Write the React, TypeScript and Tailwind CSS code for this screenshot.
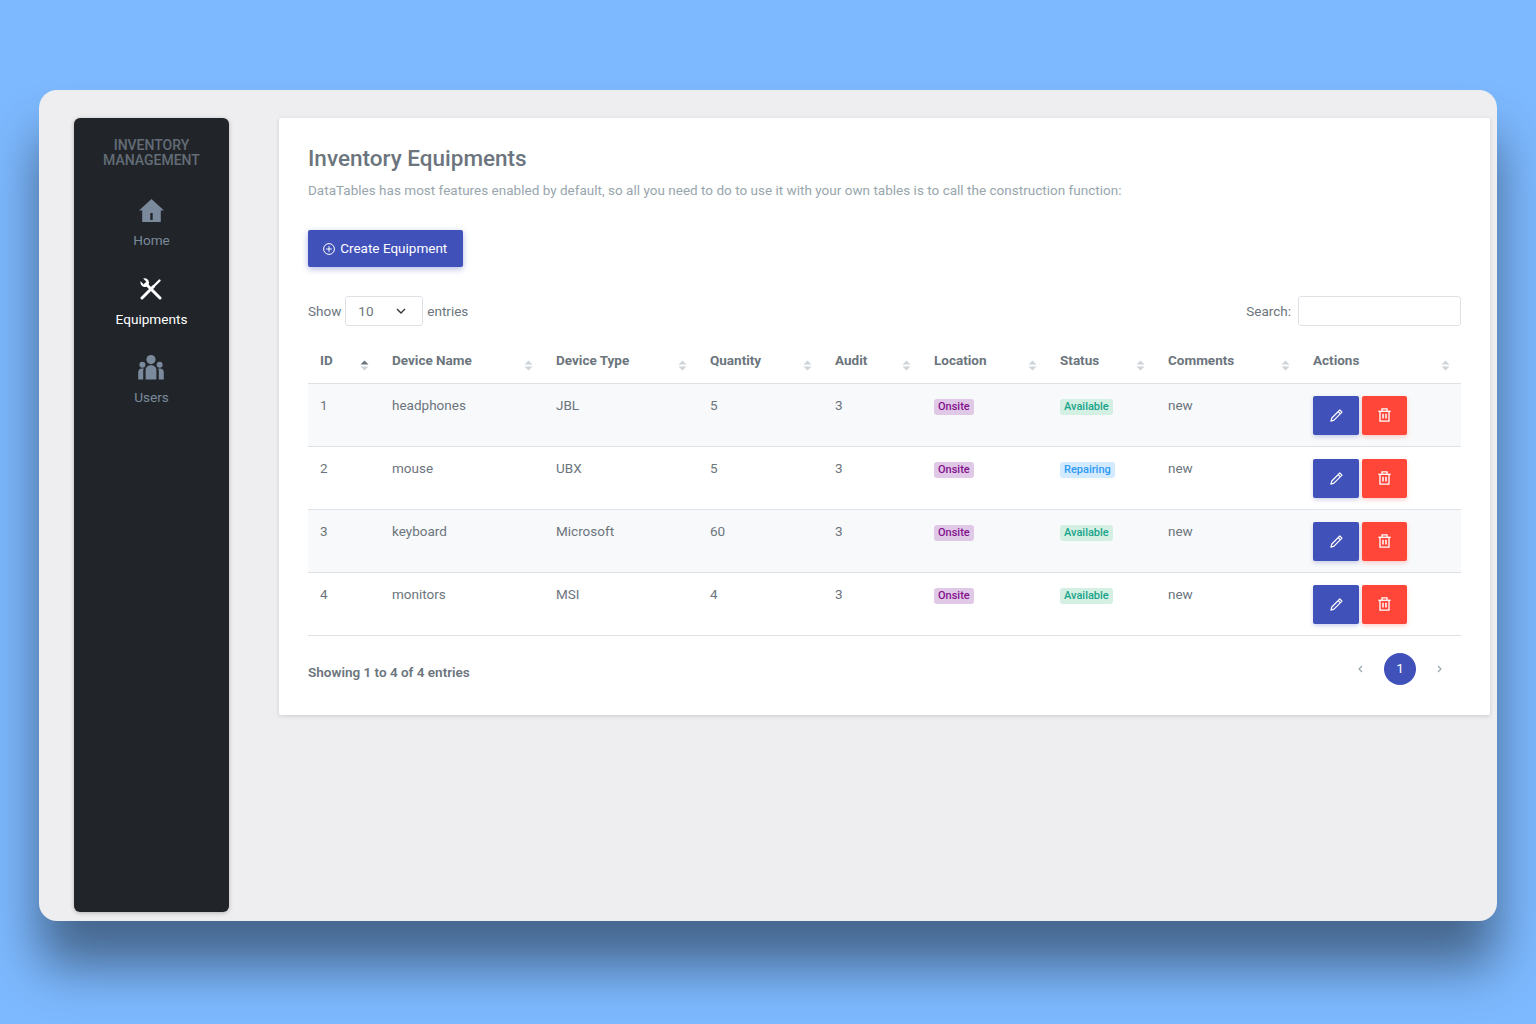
import React from "react";

const rows = [
  { id: 1, name: "headphones", type: "JBL", qty: 5, status: "Available" },
  { id: 2, name: "mouse", type: "UBX", qty: 5, status: "Repairing" },
  { id: 3, name: "keyboard", type: "Microsoft", qty: 60, status: "Available" },
  { id: 4, name: "monitors", type: "MSI", qty: 4, status: "Available" },
];

const cols = [
  { label: "ID", w: "w-[72px]", active: true },
  { label: "Device Name", w: "w-[164px]" },
  { label: "Device Type", w: "w-[154px]" },
  { label: "Quantity", w: "w-[125px]" },
  { label: "Audit", w: "w-[99px]" },
  { label: "Location", w: "w-[126px]" },
  { label: "Status", w: "w-[108px]" },
  { label: "Comments", w: "w-[145px]" },
  { label: "Actions", w: "w-[160px]" },
];

function SortIcon({ active }: { active?: boolean }) {
  return (
    <svg width="9" height="11" viewBox="0 0 9 11" className="absolute right-[11px] top-[16px]">
      <path d="M4.5 0.5 8.5 4.5H0.5Z" fill={active ? "#6c757d" : "#ced4da"} />
      <path d="M4.5 10.5 8.5 6.5H0.5Z" fill="#ced4da" />
    </svg>
  );
}

function HomeIcon() {
  return (
    <svg width="25" height="23" viewBox="0 0 25 23">
      <path d="M12.5 0 0 11.5H3.2V22.5Q3.2 23 3.8 23H21.2Q21.8 23 21.8 22.5V11.5H25Z" fill="#7a899c" />
      <rect x="11.3" y="14" width="2.4" height="7" fill="#212529" />
    </svg>
  );
}

function ToolsIcon() {
  return (
    <svg width="22" height="22" viewBox="0 0 22 22" fill="none" stroke="#fff">
      <path d="M6 6 20 20" strokeWidth="3" strokeLinecap="round" />
      <path d="M0.6 3.2 3.8 6.4 6.4 3.8 3.2 0.6C5.8 -0.4 9 1.4 9 4.4 9 7.4 6 9.6 3.4 8.8 1.2 8 0 5.4 0.6 3.2Z" fill="#fff" stroke="none" />
      <path d="M2 20 13.5 8.5" strokeWidth="3" strokeLinecap="round" />
      <path d="M13.5 8.5 19.5 2.5" strokeWidth="2.4" strokeLinecap="round" />
    </svg>
  );
}

function UsersIcon() {
  return (
    <svg width="26" height="25" viewBox="0 0 26 25" fill="#7a899c">
      <circle cx="13" cy="4.6" r="4.6" />
      <circle cx="4.4" cy="9.7" r="3" />
      <circle cx="21.6" cy="9.7" r="3" />
      <path d="M7.6 24.5V15C7.6 12 10 10.3 13 10.3S18.4 12 18.4 15V24.5Z" />
      <path d="M0.2 24.5V17.5C0.2 15 1.6 13.6 4 13.6H5.8C5.4 14.5 5.2 15.4 5.2 16.5V24.5Z" />
      <path d="M25.8 24.5V17.5C25.8 15 24.4 13.6 22 13.6H20.2C20.6 14.5 20.8 15.4 20.8 16.5V24.5Z" />
    </svg>
  );
}

function PencilIcon() {
  return (
    <svg width="13" height="13" viewBox="0 0 13 13" fill="none" stroke="#fff" strokeWidth="1.2" strokeLinejoin="round">
      <path d="M9.8 1 12 3.2 4 11.2 0.9 12.1 1.8 9Z" />
      <path d="M8.2 2.6 10.4 4.8" />
    </svg>
  );
}

function TrashIcon() {
  return (
    <svg width="13" height="14" viewBox="0 0 13 14" fill="none" stroke="#fff" strokeWidth="1.3">
      <path d="M0.3 3.3H12.7" />
      <path d="M4 3.2V0.8H9V3.2" />
      <path d="M2 3.3V13.2H11V3.3" />
      <path d="M5 5.8V10.4M8 5.8V10.4" strokeWidth="1.5" />
    </svg>
  );
}

function NavItem({ label, active, icon }: { label: string; active?: boolean; icon: React.ReactNode }) {
  return (
    <div className="flex flex-col items-center">
      <div className="h-[26px] flex items-center justify-center">{icon}</div>
      <div className={`mt-[8px] text-[13.6px] leading-[18px] ${active ? "text-white" : "text-[#7a899c]"}`}>{label}</div>
    </div>
  );
}

export default function App() {
  return (
    <div
      className="w-[1536px] h-[1024px] overflow-hidden bg-[#7db9ff] pt-[90px] pl-[39px] text-[#6c757d]"
      style={{ fontFamily: 'Roboto, "Liberation Sans", sans-serif' }}
    >
      <div className="w-[1458px] h-[831px] rounded-[18px] bg-[#eeeef0] shadow-[0_45px_52px_rgba(0,0,0,0.45)] flex items-start pt-[28px] pl-[35px]">
        <aside className="w-[155px] h-[794px] shrink-0 rounded-[6px] bg-[#212529] shadow-[0_1px_4px_rgba(0,0,0,0.25)] flex flex-col items-center pt-[20px]">
          <div className="text-center text-[14px] leading-[15px] font-medium text-[#636c77]">
            INVENTORY
            <br />
            MANAGEMENT
          </div>
          <div className="mt-[29px] flex flex-col gap-[26.5px]">
            <NavItem label="Home" icon={<HomeIcon />} />
            <NavItem label="Equipments" active icon={<ToolsIcon />} />
            <NavItem label="Users" icon={<UsersIcon />} />
          </div>
        </aside>

        <main className="ml-[50px] w-[1211px] h-[597px] shrink-0 rounded-[2px] bg-white shadow-[0_1px_4px_rgba(0,0,0,0.15)] px-[29px] pt-[25px]">
          <h1 className="text-[22.5px] leading-[30px] font-medium text-[#6c757d]">Inventory Equipments</h1>
          <p className="mt-[8px] text-[13.5px] leading-[18px] text-[#98a6ad] tracking-[0.015px]">
            DataTables has most features enabled by default, so all you need to do to use it with your own tables is to call the construction function:
          </p>
          <button className="mt-[31px] h-[37px] w-[154.5px] rounded-[2px] bg-[#4051ba] text-white text-[13.5px] flex items-center justify-center gap-[5px] shadow-[0_2px_6px_rgba(64,81,186,0.4)]">
            <svg width="12" height="12" viewBox="0 0 12 12" fill="none" stroke="#fff" strokeWidth="1">
              <circle cx="6" cy="6" r="5.4" />
              <path d="M6 3.2V8.8M3.2 6H8.8" />
            </svg>
            Create Equipment
          </button>

          <div className="mt-[29px] flex items-center justify-between text-[13.5px]">
            <div className="flex items-center gap-[4px]">
              <span>Show</span>
              <div className="w-[78px] h-[30px] rounded-[3px] border border-[#dee2e6] flex items-center justify-between pl-[12px] pr-[16px]">
                <span>10</span>
                <svg width="10" height="6" viewBox="0 0 10 6" fill="none" stroke="#343a40" strokeWidth="1.4">
                  <path d="M1 1 5 5 9 1" />
                </svg>
              </div>
              <span>entries</span>
            </div>
            <div className="flex items-center gap-[7px]">
              <span>Search:</span>
              <div className="w-[163px] h-[30px] rounded-[3px] border border-[#dee2e6]" />
            </div>
          </div>

          <table className="mt-[18px] w-[1153px] table-fixed border-collapse text-[13.5px]">
            <thead>
              <tr className="h-[39px] border-b border-[#dee2e6]">
                {cols.map((c) => (
                  <th key={c.label} className={`${c.w} relative pl-[12px] pb-[6px] text-left font-bold text-[#6c757d] align-middle`}>
                    {c.label}
                    <SortIcon active={c.active} />
                  </th>
                ))}
              </tr>
            </thead>
            <tbody>
              {rows.map((r, i) => (
                <tr key={r.id} className={`h-[63px] border-b border-[#dee2e6] align-top ${i % 2 === 0 ? "bg-[#f8f9fa]" : "bg-white"}`}>
                  <td className="pl-[12px] pt-[12px] leading-[18px]">{r.id}</td>
                  <td className="pl-[12px] pt-[12px] leading-[18px]">{r.name}</td>
                  <td className="pl-[12px] pt-[12px] leading-[18px]">{r.type}</td>
                  <td className="pl-[12px] pt-[12px] leading-[18px]">{r.qty}</td>
                  <td className="pl-[12px] pt-[12px] leading-[18px]">3</td>
                  <td className="pl-[12px] pt-[12px] leading-[18px]">
                    <span className="inline-block h-[16px] rounded-[3px] bg-[#dfc9e6] px-[4px] text-[11px] leading-[16px] font-medium text-[#84118d]">Onsite</span>
                  </td>
                  <td className="pl-[12px] pt-[12px] leading-[18px]">
                    {r.status === "Available" ? (
                      <span className="inline-block h-[16px] rounded-[3px] bg-[#d4f0e3] px-[4px] text-[11px] leading-[16px] font-medium text-[#1aa38a]">Available</span>
                    ) : (
                      <span className="inline-block h-[16px] rounded-[3px] bg-[#d3eaff] px-[4px] text-[11px] leading-[16px] font-medium text-[#2e9bf5]">Repairing</span>
                    )}
                  </td>
                  <td className="pl-[12px] pt-[12px] leading-[18px]">new</td>
                  <td className="pl-[12px] pt-[12px]">
                    <div className="flex gap-[3px]">
                      <button className="w-[46px] h-[39px] rounded-[2px] bg-[#4051ba] flex items-center justify-center shadow-[0_2px_4px_rgba(64,81,186,0.25)]">
                        <PencilIcon />
                      </button>
                      <button className="w-[45px] h-[39px] rounded-[2px] bg-[#ff4638] flex items-center justify-center shadow-[0_2px_4px_rgba(255,70,56,0.25)]">
                        <TrashIcon />
                      </button>
                    </div>
                  </td>
                </tr>
              ))}
            </tbody>
          </table>

          <div className="mt-[17px] flex items-center justify-between">
            <div className="mt-[7px] text-[13.5px] font-semibold">Showing 1 to 4 of 4 entries</div>
            <div className="flex items-center pr-[18px]">
              <svg width="6" height="8" viewBox="0 0 6 8" fill="none" stroke="#98a6ad" strokeWidth="1.2"><path d="M5 1 2 4 5 7" /></svg>
              <div className="ml-[21px] w-[32px] h-[32px] rounded-full bg-[#4051ba] text-white text-[13.5px] flex items-center justify-center">1</div>
              <svg className="ml-[21px]" width="6" height="8" viewBox="0 0 6 8" fill="none" stroke="#98a6ad" strokeWidth="1.2"><path d="M1 1 4 4 1 7" /></svg>
            </div>
          </div>
        </main>
      </div>
    </div>
  );
}
